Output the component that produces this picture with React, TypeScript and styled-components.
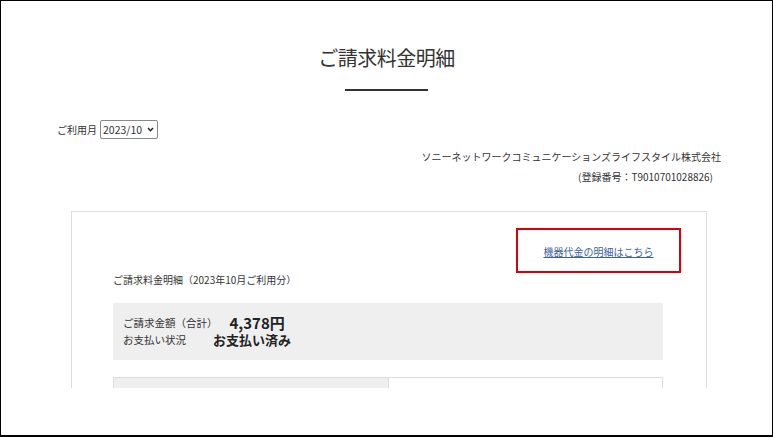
import styled, { createGlobalStyle } from "styled-components"

const GlobalStyle = createGlobalStyle`
    body {
        margin: 0;
        background: #fff;
        font-family: "Noto Sans CJK JP", "Noto Sans", sans-serif;
        color: #333;
    }
`

const Frame = styled.div`
    width: 773px;
    height: 437px;
    box-sizing: border-box;
    border: 1px solid #000;
    border-bottom-width: 2px;
    background: #fff;
    overflow: hidden;
`

const Viewport = styled.div`
    height: 387px;
    overflow: hidden;
`

const Header = styled.header`
    padding-top: 42px;
    display: flex;
    flex-direction: column;
    align-items: center;
`

const Title = styled.h1`
    margin: 0;
    font-size: 20px;
    font-weight: 400;
    line-height: 30px;
    color: #333;
    letter-spacing: -0.5px;
`

const TitleRule = styled.div`
    width: 83px;
    height: 2px;
    background: #333;
    margin-top: 16px;
`

const MonthRow = styled.div`
    display: flex;
    align-items: center;
    gap: 3px;
    margin-top: 29px;
    padding-left: 56px;
    font-size: 10px;
`

const SelectWrap = styled.div`
    position: relative;
    display: flex;
    svg {
        position: absolute;
        right: 4px;
        top: 7px;
        pointer-events: none;
    }
`

const MonthSelect = styled.select`
    appearance: none;
    height: 19px;
    width: 58px;
    box-sizing: border-box;
    padding: 0 0 0 2px;
    font-family: "Noto Sans CJK JP", sans-serif;
    font-size: 10.5px;
    color: #333;
    border: 1px solid #888;
    border-radius: 2px;
    background: #fff;
`

const Company = styled.div`
    margin-top: 8px;
    padding-right: 51px;
    display: flex;
    flex-direction: column;
    align-items: flex-end;
    font-size: 10px;
    line-height: 20px;
`

const RegNo = styled.span`
    margin-right: 8px;
`

const Card = styled.section`
    margin: 24px 0 0 70px;
    width: 636px;
    box-sizing: border-box;
    border: 1px solid #ddd;
    border-bottom: none;
    padding: 16px 43px 0 41px;
    height: 200px;
`

const LinkRow = styled.div`
    display: flex;
    justify-content: flex-end;
    margin-right: -18px;
`

const Marked = styled.div`
    width: 165px;
    height: 45px;
    box-sizing: border-box;
    border: 2px solid #d7000f;
    display: flex;
    align-items: center;
    justify-content: center;
`

const DetailLink = styled.a`
    font-size: 10px;
    color: #3d5f9e;
    text-decoration: underline;
    cursor: pointer;
    margin-top: 2px;
`

const SubTitle = styled.p`
    margin: 0;
    font-size: 10px;
    line-height: 14px;
`

const SummaryBox = styled.div`
    margin-top: 16px;
    background: #efefef;
    padding: 11px 10px 12px;
`

const SummaryRow = styled.div<{ $gap: number }>`
    display: flex;
    align-items: center;
    gap: ${p => p.$gap}px;
    height: 17px;
`

const SummaryLabel = styled.span`
    font-size: 10.5px;
    line-height: 16px;
    color: #333;
`

const SummaryValue = styled.span<{ $size: number }>`
    font-size: ${p => p.$size}px;
    line-height: 17px;
    font-weight: 700;
    color: #222;
`

const BreakdownTable = styled.div`
    margin-top: 17px;
    display: grid;
    grid-template-columns: 1fr 1fr;
    border: 1px solid #ddd;
    height: 40px;
`

const BreakdownCell = styled.div<{ $head?: boolean }>`
    background: ${p => (p.$head ? "#efefef" : "#fff")};
    border-left: ${p => (p.$head ? "none" : "1px solid #ddd")};
`

const App = () => {
    return (
        <>
            <GlobalStyle />
            <Frame>
                <Viewport>
                    <Header>
                        <Title>ご請求料金明細</Title>
                        <TitleRule />
                    </Header>
                    <MonthRow>
                        <span>ご利用月</span>
                        <SelectWrap>
                            <MonthSelect defaultValue="2023/10">
                                <option>2023/10</option>
                                <option>2023/09</option>
                                <option>2023/08</option>
                            </MonthSelect>
                            <svg width="7" height="5" viewBox="0 0 8 6">
                                <path d="M1 1.2 L4 4.4 L7 1.2" fill="none" stroke="#222" strokeWidth="1.8" />
                            </svg>
                        </SelectWrap>
                    </MonthRow>
                    <Company>
                        <span>ソニーネットワークコミュニケーションズライフスタイル株式会社</span>
                        <RegNo>(登録番号：T9010701028826)</RegNo>
                    </Company>
                    <Card>
                        <LinkRow>
                            <Marked>
                                <DetailLink>機器代金の明細はこちら</DetailLink>
                            </Marked>
                        </LinkRow>
                        <SubTitle>ご請求料金明細（2023年10月ご利用分）</SubTitle>
                        <SummaryBox>
                            <SummaryRow $gap={12}>
                                <SummaryLabel>ご請求金額（合計）</SummaryLabel>
                                <SummaryValue $size={15}>4,378円</SummaryValue>
                            </SummaryRow>
                            <SummaryRow $gap={27}>
                                <SummaryLabel>お支払い状況</SummaryLabel>
                                <SummaryValue $size={13}>お支払い済み</SummaryValue>
                            </SummaryRow>
                        </SummaryBox>
                        <BreakdownTable>
                            <BreakdownCell $head />
                            <BreakdownCell />
                        </BreakdownTable>
                    </Card>
                </Viewport>
            </Frame>
        </>
    )
}

export default App
